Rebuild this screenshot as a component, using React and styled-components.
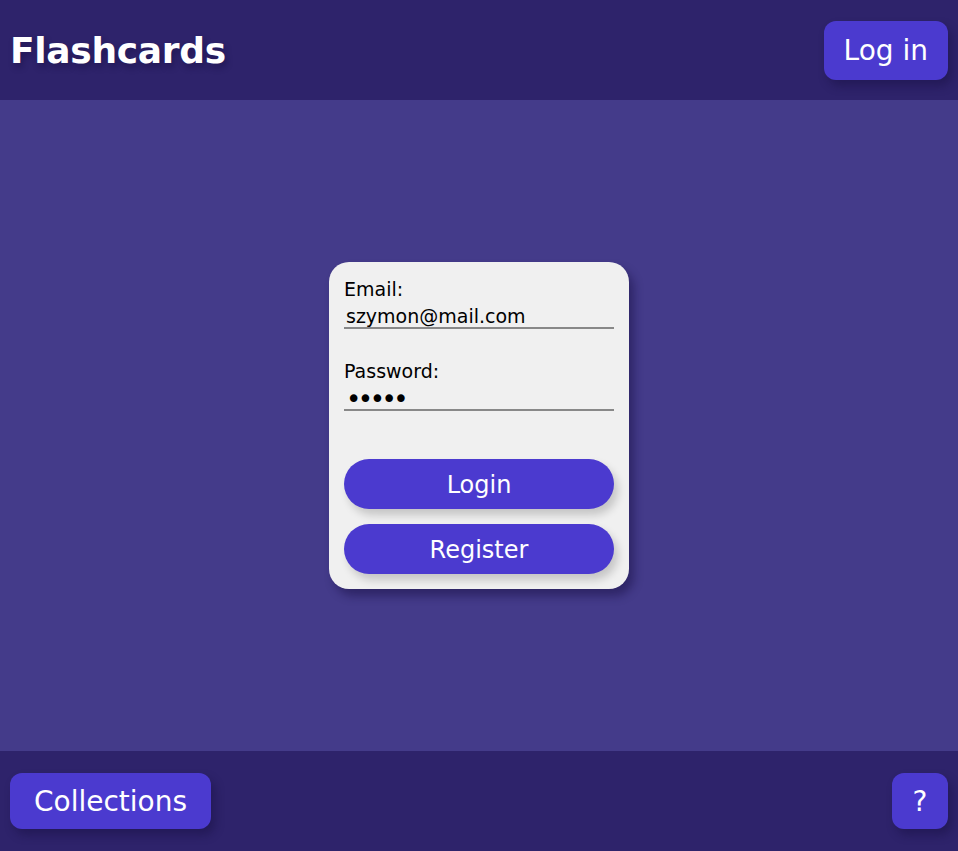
import React from 'react'
import styled, { createGlobalStyle } from 'styled-components'

const GlobalStyle = createGlobalStyle`
  html, body {
    margin: 0;
    padding: 0;
    height: 100%;
  }
  body {
    font-family: "DejaVu Sans", Verdana, sans-serif;
  }
  #root {
    height: 100%;
  }
`

const Page = styled.div`
  height: 851px;
  display: flex;
  flex-direction: column;
  background: #443b8a;
`

const Bar = styled.div`
  height: 100px;
  flex-shrink: 0;
  background: #2e236b;
  display: flex;
  align-items: center;
  justify-content: space-between;
  padding: 0 10px;
  box-sizing: border-box;
`

const Logo = styled.h1`
  margin: 0;
  color: #ffffff;
  font-size: 36px;
  font-weight: bold;
  letter-spacing: -0.3px;
  text-shadow: 2px 4px 6px rgba(20, 12, 60, 0.45);
`

const NavButton = styled.button`
  background: #4b3acf;
  color: #ffffff;
  border: none;
  border-radius: 12px;
  height: ${p => p.$height || 56}px;
  min-width: 56px;
  padding: 0 ${p => p.$padX ?? 20}px;
  font-family: inherit;
  font-size: 28px;
  box-shadow: 4px 6px 10px rgba(20, 12, 60, 0.4);
  cursor: pointer;
`

const Main = styled.main`
  flex: 1;
  display: flex;
  align-items: center;
  justify-content: center;
`

const Card = styled.form`
  width: 300px;
  box-sizing: border-box;
  background: #f0f0f0;
  border-radius: 20px;
  padding: 15px;
  display: flex;
  flex-direction: column;
  box-shadow: 5px 7px 10px rgba(20, 12, 60, 0.45);
`

const Field = styled.label`
  display: flex;
  flex-direction: column;
  margin-bottom: ${p => p.$gap || 30}px;
  font-size: 19px;
  color: #000000;
  line-height: 24px;
`

const Input = styled.input`
  border: none;
  border-bottom: 2px solid #888888;
  background: transparent;
  font-family: inherit;
  font-size: 19px;
  color: #000000;
  padding: 3px 2px 0;
  height: 28px;
  box-sizing: border-box;
  outline: none;

  &[type='password'] {
    font-size: 26px;
    letter-spacing: -3.5px;
    padding-top: 5px;
  }
`

const Actions = styled.div`
  display: flex;
  flex-direction: column;
  gap: 15px;
`

const PillButton = styled.button`
  height: 50px;
  border: none;
  border-radius: 25px;
  background: #4b3acf;
  color: #ffffff;
  font-family: inherit;
  font-size: 24px;
  padding-top: 3px;
  box-shadow: 4px 6px 8px rgba(0, 0, 0, 0.18);
  cursor: pointer;
`

const App = () => (
  <>
    <GlobalStyle />
    <Page>
      <Bar>
        <Logo>Flashcards</Logo>
        <NavButton type="button" $height={59}>Log in</NavButton>
      </Bar>
      <Main>
        <Card onSubmit={e => e.preventDefault()}>
          <Field>
            Email:
            <Input type="email" defaultValue="szymon@mail.com" />
          </Field>
          <Field $gap={48}>
            Password:
            <Input type="password" defaultValue="12345" />
          </Field>
          <Actions>
            <PillButton type="submit">Login</PillButton>
            <PillButton type="button">Register</PillButton>
          </Actions>
        </Card>
      </Main>
      <Bar>
        <NavButton type="button" $padX={24}>Collections</NavButton>
        <NavButton type="button" $padX={0}>?</NavButton>
      </Bar>
    </Page>
  </>
)

export default App
